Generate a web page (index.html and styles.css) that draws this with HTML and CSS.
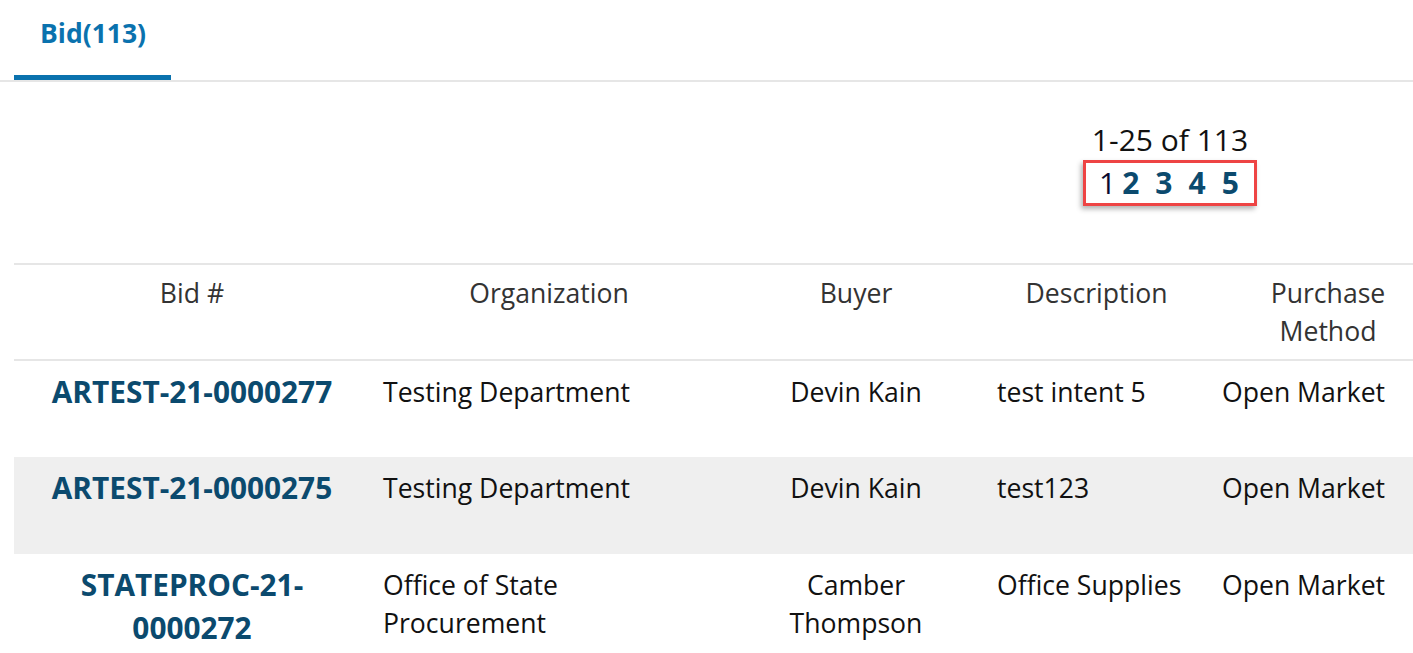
FILE: index.html
```html
<!DOCTYPE html>
<html lang="en">
<head>
    <meta charset="UTF-8">
    <title>Bids</title>
    <link rel="stylesheet" href="styles.css">
</head>
<body>
    <div class="tabs">
        <a href="#" class="tab active">Bid(113)</a>
    </div>

    <div class="pager">
        <div class="pager-info">
            <div class="pager-count">1-25 of 113</div>
            <div class="pager-pages">
                <span class="current">1</span>
                <a href="#">2</a>
                <a href="#">3</a>
                <a href="#">4</a>
                <a href="#">5</a>
            </div>
        </div>
    </div>

    <table class="bids">
        <colgroup>
            <col class="c-bid">
            <col class="c-org">
            <col class="c-buyer">
            <col class="c-desc">
            <col class="c-method">
        </colgroup>
        <thead>
            <tr>
                <th>Bid #</th>
                <th>Organization</th>
                <th>Buyer</th>
                <th>Description</th>
                <th>Purchase Method</th>
            </tr>
        </thead>
        <tbody>
            <tr>
                <td class="bid-no"><a href="#">ARTEST-21-0000277</a></td>
                <td>Testing Department</td>
                <td class="center">Devin Kain</td>
                <td>test intent 5</td>
                <td>Open Market</td>
            </tr>
            <tr class="alt">
                <td class="bid-no"><a href="#">ARTEST-21-0000275</a></td>
                <td>Testing Department</td>
                <td class="center">Devin Kain</td>
                <td>test123</td>
                <td>Open Market</td>
            </tr>
            <tr>
                <td class="bid-no"><a href="#">STATEPROC-21-0000272</a></td>
                <td>Office of State Procurement</td>
                <td class="center">Camber Thompson</td>
                <td>Office Supplies</td>
                <td>Open Market</td>
            </tr>
        </tbody>
    </table>
</body>
</html>
```

FILE: styles.css
```css
* {
    margin: 0;
    padding: 0;
    box-sizing: border-box;
}

html, body {
    overflow: hidden;
}

body {
    font-family: "Open Sans", Arial, sans-serif;
    color: #000;
    background: #fff;
}

/* tabs */
.tabs {
    display: flex;
    border-bottom: 2px solid #e6e6e6;
    padding-left: 14px;
}

.tab {
    display: block;
    padding: 15px 25px 24px 26px;
    font-size: 26.5px;
    font-weight: 700;
    color: #0a72ae;
    text-decoration: none;
    line-height: 36px;
    border-bottom: 5px solid transparent;
}

.tab.active {
    border-bottom-color: #0a72ae;
}

/* pager */
.pager {
    display: flex;
    justify-content: flex-end;
    padding: 38px 156px 0 0;
    height: 181px;
}

.pager-info {
    display: flex;
    flex-direction: column;
    align-items: center;
}

.pager-count {
    font-size: 30px;
    line-height: 40px;
    color: #111;
}

.pager-pages {
    display: flex;
    gap: 16px;
    padding: 0 12px 0 13px;
    height: 46px;
    width: 174px;
    border: 3px solid #ee4444;
    box-shadow: -2px 3px 5px rgba(0, 0, 0, 0.3);
    font-size: 30px;
    line-height: 40px;
}

.pager-pages .current {
    color: #0a0a30;
    margin-right: -10px;
}

.pager-pages a {
    color: #0b4a6e;
    font-weight: 700;
    text-decoration: none;
}

/* table */
.bids {
    margin-left: 14px;
    width: 1433px;
    table-layout: fixed;
    border-collapse: collapse;
    font-size: 26.6px;
    line-height: 38px;
}

.c-bid { width: 356px; }
.c-org { width: 358px; }
.c-buyer { width: 256px; }
.c-desc { width: 225px; }
.c-method { width: 238px; }

.bids th {
    font-weight: 400;
    color: #333;
    padding: 9px 13px;
    text-align: center;
    vertical-align: top;
    border-top: 2px solid #e6e6e6;
    border-bottom: 2px solid #e6e6e6;
}

.bids td {
    padding: 12px 13px 10px;
    height: 97px;
    vertical-align: top;
    text-align: left;
    color: #111;
}

.bids tr.alt td {
    background: #efefef;
}

.bids td.center {
    text-align: center;
}

.bids td.bid-no {
    text-align: center;
    padding-top: 10px;
    line-height: 42px;
}

.bid-no a {
    color: #0b4a6e;
    font-weight: 700;
    font-size: 29.8px;
    text-decoration: none;
}
```
